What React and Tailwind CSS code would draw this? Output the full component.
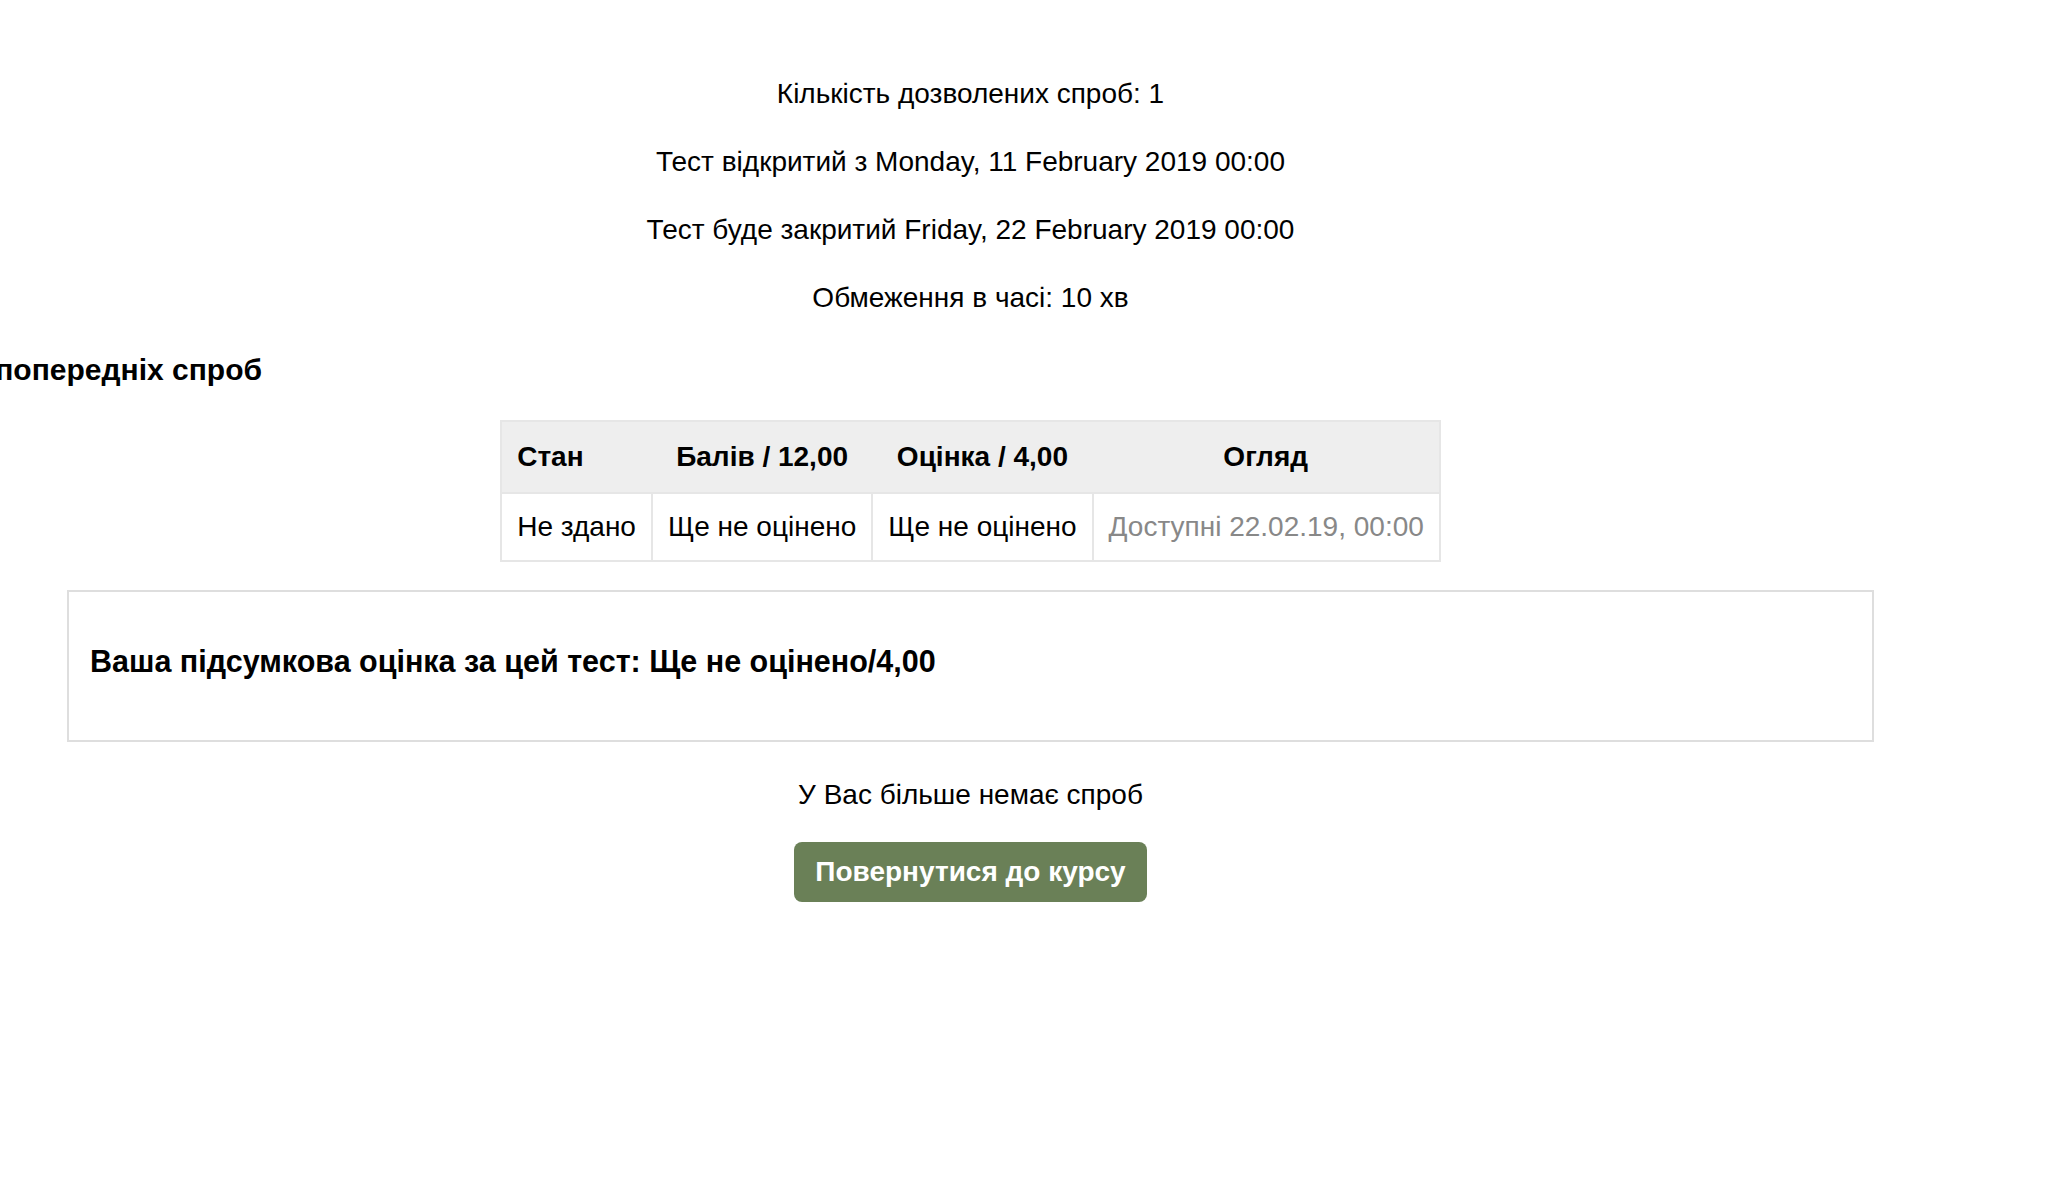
export default function App() {
  const rows = [
    ["Не здано", "Ще не оцінено", "Ще не оцінено", "Доступні 22.02.19, 00:00"],
  ];

  return (
    <div className="w-[2052px] min-h-[1180px] bg-white overflow-hidden text-black text-[28px] font-['Liberation_Sans',Arial,sans-serif]">
      <div className="w-[1941px] flex flex-col items-center pt-[74px]">
        <div className="flex flex-col items-center gap-[28px] leading-[40px]">
          <p>Кількість дозволених спроб: 1</p>
          <p>Тест відкритий з Monday, 11 February 2019 00:00</p>
          <p>Тест буде закритий Friday, 22 February 2019 00:00</p>
          <p>Обмеження в часі: 10 хв</p>
        </div>

        {/* heading runs off the left edge in the reference */}
        <div className="self-start w-[262px] flex justify-end mt-[32px]">
          <h3 className="whitespace-nowrap font-bold text-[30px] leading-[40px]">
            Підсумок ваших попередніх спроб
          </h3>
        </div>

        <table className="mt-[30px] border-collapse border-2 border-[#e6e6e6]">
          <thead>
            <tr className="bg-[#eeeeee] h-[72px] font-bold">
              <th className="px-[15px] text-left">Стан</th>
              <th className="px-[15px] text-center">Балів / 12,00</th>
              <th className="px-[15px] text-center">Оцінка / 4,00</th>
              <th className="px-[15px] text-center">Огляд</th>
            </tr>
          </thead>
          <tbody>
            {rows.map((row, i) => (
              <tr key={i} className="h-[68px]">
                {row.map((cell, j) => (
                  <td
                    key={j}
                    className={
                      j === 3
                        ? "px-[15px] border-2 border-[#e6e6e6] text-[#888888]"
                        : "px-[15px] border-2 border-[#e6e6e6]"
                    }
                  >
                    {cell}
                  </td>
                ))}
              </tr>
            ))}
          </tbody>
        </table>

        <div className="mt-[28px] w-[1807px] h-[152px] border-2 border-[#dedede] flex items-center pl-[21px] pb-[10px]">
          <h3 className="font-bold text-[30.5px] leading-[40px]">
            Ваша підсумкова оцінка за цей тест: Ще не оцінено/4,00
          </h3>
        </div>

        <p className="mt-[33px] leading-[40px]">У Вас більше немає спроб</p>

        <button className="mt-[27px] h-[60px] px-[21px] rounded-[8px] bg-[#6a8057] text-white font-bold text-[28px]">
          Повернутися до курсу
        </button>
      </div>
    </div>
  );
}
